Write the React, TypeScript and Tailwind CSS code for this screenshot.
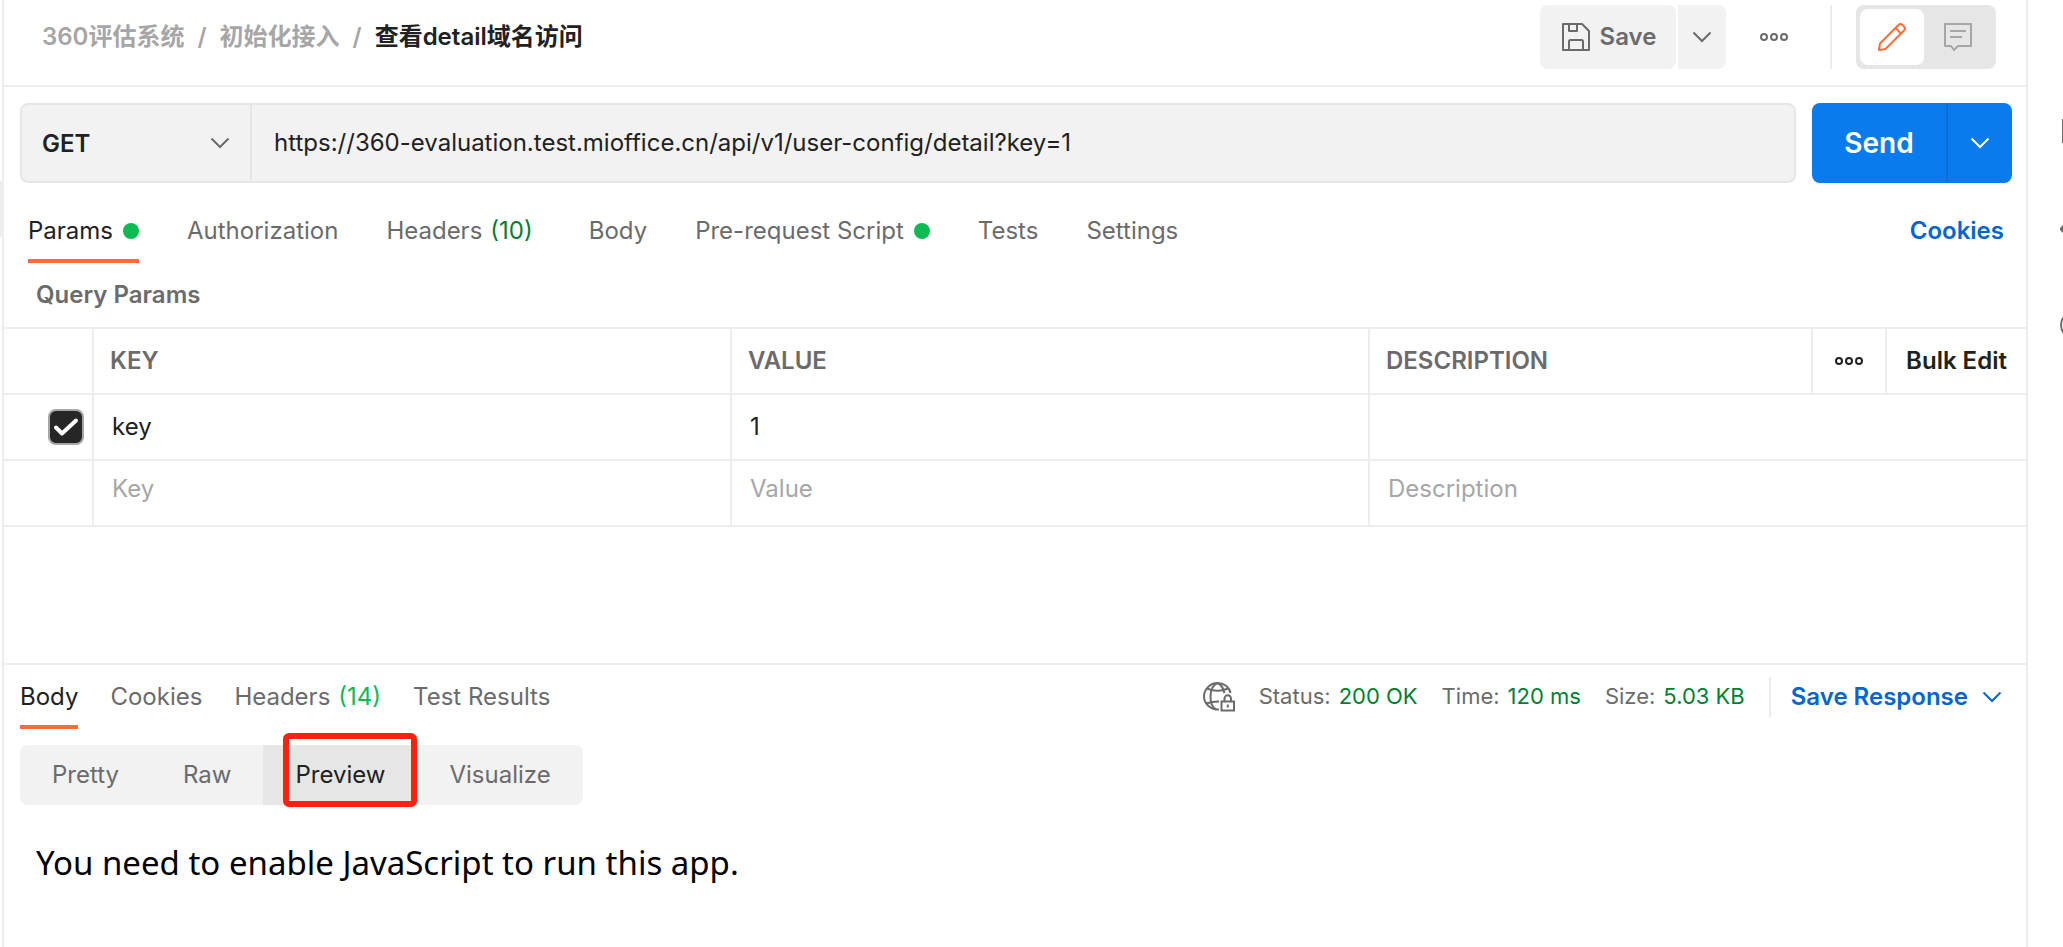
import { useState } from "react";

const REQUEST_TABS = [
  { label: "Params", dot: true },
  { label: "Authorization" },
  { label: "Headers", count: "(10)" },
  { label: "Body" },
  { label: "Pre-request Script", dot: true },
  { label: "Tests" },
  { label: "Settings" },
];

const RESPONSE_TABS = [
  { label: "Body" },
  { label: "Cookies" },
  { label: "Headers", count: "(14)" },
  { label: "Test Results" },
];

const VIEWS = ["Pretty", "Raw", "Preview", "Visualize"];

const STATS = [
  { label: "Status:", value: "200 OK" },
  { label: "Time:", value: "120 ms" },
  { label: "Size:", value: "5.03 KB" },
];

function Chevron() {
  return (
    <svg width="20" height="12" viewBox="0 0 20 12" fill="none" stroke="currentColor" strokeWidth="2" aria-hidden="true">
      <path d="M1.5 1.5 10 10l8.5-8.5" />
    </svg>
  );
}

function Dots() {
  return (
    <svg width="28" height="10" viewBox="0 0 28 10" fill="none" stroke="currentColor" strokeWidth="2" aria-hidden="true">
      <circle cx="4" cy="5" r="3" />
      <circle cx="14" cy="5" r="3" />
      <circle cx="24" cy="5" r="3" />
    </svg>
  );
}

function SaveIcon() {
  return (
    <svg width="28" height="28" viewBox="0 0 28 28" fill="none" stroke="currentColor" strokeWidth="2" strokeLinejoin="round" aria-hidden="true">
      <path d="M1 1h19l7 7v19H1z" />
      <path d="M7 1v7h8V1" />
      <path d="M7 27V18.500Q7 17 8.500 17H19.500Q21 17 21 18.500V27" />
    </svg>
  );
}

function PencilIcon() {
  return (
    <svg width="28" height="28" viewBox="0 0 28 28" fill="none" stroke="currentColor" strokeWidth="2" strokeLinejoin="round" aria-hidden="true">
      <path d="M1 27l1-6.500L20.500 2Q22.500 0 24.500 2L26 3.500Q28 5.500 26 7.500L7.500 26z" />
      <path d="M17.500 5l5.500 5.500" />
    </svg>
  );
}

function CommentIcon() {
  return (
    <svg width="28" height="28" viewBox="0 0 28 28" fill="none" stroke="currentColor" strokeWidth="2" strokeLinejoin="round" aria-hidden="true">
      <path d="M1 1h26v22H14l-4 4-3-4H1z" />
      <path d="M6 8h16M6 14h12" />
    </svg>
  );
}

function GlobeLockIcon() {
  return (
    <svg width="32" height="30" viewBox="0 0 32 30" fill="none" stroke="currentColor" strokeWidth="2" aria-hidden="true">
      <path d="M16 27.500H14.500C7 27 1 21.500 1 14.500S7 1 14.500 1c6.500 0 12 4 13 10" />
      <path d="M13 27.500c-4-2-5.500-7-5.500-13S10 3 14.500 1C18 2.500 20.500 6 21.300 11" />
      <path d="M4 6.500q10.500 4.500 21 0M3 21.500q6-2 13-2" />
      <path d="M18.500 19.500h12.500v9H18.500z" />
      <path d="M21.500 19.500v-3a3.200 3.200 0 0 1 6.500 0v3M24.800 22.500v3" />
    </svg>
  );
}

function Tab({ tab, active, onClick, countClass, className }: {
  tab: { label: string; dot?: boolean; count?: string };
  active: boolean;
  onClick: () => void;
  countClass: string;
  className: string;
}) {
  return (
    <button onClick={onClick} role="tab" aria-selected={active}
      className={`flex items-center gap-2 border-b-4 whitespace-nowrap ${className} ${
        active ? "border-[#ff6c37] text-[#212121]" : "border-transparent text-[#6b6b6b]"
      }`}>
      {tab.label}
      {tab.count && <span className={countClass}>{tab.count}</span>}
      {tab.dot && <span className="ml-[2px] size-4 rounded-full bg-[#0cbb52]" />}
    </button>
  );
}

export default function App() {
  const [requestTab, setRequestTab] = useState("Params");
  const [responseTab, setResponseTab] = useState("Body");
  const [view, setView] = useState("Preview");

  return (
    <div className="flex min-h-screen overflow-hidden bg-white font-['Inter','Noto_Sans_CJK_SC',sans-serif] text-2xl text-[#212121]">
      {/* Sidebar edge */}
      <div className="w-[2px] shrink-0 pt-[181px]">
        <div className="h-14 bg-[#ededed]" />
      </div>

      <main className="min-w-0 flex-1 border-x-2 border-[#ededed]">
        <header className="flex items-center justify-between border-b-2 border-[#ededed] pt-[5px] pr-[30px] pb-4 pl-[38px]">
          <nav className="flex items-center gap-[13px] font-semibold text-[#a6a6a6]">
            <a href="#collection">360评估系统</a>
            <span>/</span>
            <a href="#folder">初始化接入</a>
            <span>/</span>
            <span className="text-[#212121]">查看detail域名访问</span>
          </nav>

          <div className="flex h-16 items-center text-[#6b6b6b]">
            <button className="flex h-full w-[136px] items-center justify-center gap-[10px] rounded-lg bg-[#f2f2f2] pl-[2px] font-semibold">
              <SaveIcon />
              Save
            </button>
            <button aria-label="Save options" className="ml-[2px] flex h-full w-12 items-center justify-center rounded-r-lg bg-[#f2f2f2]">
              <Chevron />
            </button>
            <button aria-label="More actions" className="flex h-full w-24 items-center justify-center">
              <Dots />
            </button>
            <div className="mr-6 ml-2 h-full w-[2px] bg-[#ededed]" />
            <div className="flex h-full w-[140px] rounded-lg bg-[#e6e6e6] p-1">
              <button aria-label="Build" className="flex w-16 items-center justify-center rounded-lg bg-white text-[#ff6c37]">
                <PencilIcon />
              </button>
              <button aria-label="Comments" className="flex flex-1 items-center justify-center text-[#a6a6a6]">
                <CommentIcon />
              </button>
            </div>
          </div>
        </header>

        {/* Request line */}
        <section className="flex gap-4 pt-4 pr-[14px] pl-4">
          <div className="flex h-20 flex-1 rounded-lg border-2 border-[#e6e6e6] bg-[#f2f2f2]">
            <div className="relative w-[230px] border-r-2 border-[#e6e6e6]">
              <select aria-label="Method" className="size-full appearance-none bg-transparent pt-[2px] pl-5 font-semibold">
                <option>GET</option>
                <option>POST</option>
              </select>
              <span className="pointer-events-none absolute top-8 right-5 text-[#6b6b6b]">
                <Chevron />
              </span>
            </div>
            <input aria-label="Request URL" className="min-w-0 flex-1 bg-transparent px-[22px]"
              defaultValue="https://360-evaluation.test.mioffice.cn/api/v1/user-config/detail?key=1" />
          </div>
          <div className="flex h-20 w-[200px] overflow-hidden rounded-lg bg-[#097bed] text-white">
            <button className="flex-1 pt-[2px] text-[28px] font-semibold">Send</button>
            <button aria-label="Send options" className="flex w-[66px] items-center justify-center border-l-2 border-[#0870d8]">
              <Chevron />
            </button>
          </div>
        </section>

        <div className="flex items-start justify-between pr-[22px] pl-6">
          <div role="tablist" className="flex gap-12">
            {REQUEST_TABS.map((t) => (
              <Tab key={t.label} tab={t} active={requestTab === t.label} onClick={() => setRequestTab(t.label)}
                countClass="mr-2 text-[#007f31]" className="h-20 pt-5" />
            ))}
          </div>
          <a href="#cookies" className="pt-8 font-semibold text-[#0265d2]">Cookies</a>
        </div>

        <h2 className="px-8 pt-4 pb-4 font-semibold text-[#6b6b6b]">Query Params</h2>

        <table className="w-full table-fixed border-collapse text-left">
          <colgroup>
            <col className="w-[89px]" />
            <col />
            <col />
            <col className="w-[443px]" />
            <col className="w-[74px]" />
            <col className="w-[140px]" />
          </colgroup>
          <thead>
            <tr className="h-[66px] border-y-2 border-[#ededed] text-[#6b6b6b]">
              <th className="border-r-2 border-[#ededed]" />
              <th className="border-r-2 border-[#ededed] px-4 font-semibold">KEY</th>
              <th className="border-r-2 border-[#ededed] px-4 font-semibold">VALUE</th>
              <th className="border-r-2 border-[#ededed] px-4 font-semibold">DESCRIPTION</th>
              <th className="border-r-2 border-[#ededed] text-[#212121]">
                <button aria-label="Column options" className="flex w-full items-center justify-center">
                  <Dots />
                </button>
              </th>
              <th className="text-center font-semibold whitespace-nowrap text-[#212121]">
                <button>Bulk Edit</button>
              </th>
            </tr>
          </thead>
          <tbody>
            <tr className="h-[66px] border-b-2 border-[#ededed]">
              <td className="border-r-2 border-[#ededed]">
                <label className="relative ml-11 block size-9">
                  <input type="checkbox" defaultChecked aria-label="Enable key"
                    className="peer block size-9 appearance-none rounded-lg border-2 border-[#a6a6a6] checked:bg-[#262626]" />
                  <svg className="pointer-events-none absolute inset-0 hidden peer-checked:block" width="36" height="36" viewBox="0 0 36 36"
                    fill="none" stroke="#fff" strokeWidth="4" strokeLinecap="round" strokeLinejoin="round" aria-hidden="true">
                    <path d="M8 18.500l6 6L28 11.500" />
                  </svg>
                </label>
              </td>
              <td className="border-r-2 border-[#ededed] px-[18px]">key</td>
              <td className="border-r-2 border-[#ededed] px-[18px]">1</td>
              <td colSpan={3} />
            </tr>
            <tr className="h-[66px] border-b-2 border-[#ededed]">
              <td className="border-r-2 border-[#ededed]" />
              {["Key", "Value"].map((name) => (
                <td key={name} className="border-r-2 border-[#ededed] px-[18px] pb-2">
                  <input aria-label={`New ${name}`} placeholder={name} className="block w-full placeholder:text-[#a6a6a6]" />
                </td>
              ))}
              <td colSpan={3} className="px-[18px] pb-2">
                <input aria-label="New Description" placeholder="Description" className="block w-full placeholder:text-[#a6a6a6]" />
              </td>
            </tr>
          </tbody>
        </table>

        {/* Response */}
        <section className="mt-[136px] border-t-2 border-[#ededed]">
          <div className="flex items-start justify-between pr-6 pl-4">
            <div role="tablist" className="flex gap-8">
              {RESPONSE_TABS.map((t) => (
                <Tab key={t.label} tab={t} active={responseTab === t.label} onClick={() => setResponseTab(t.label)}
                  countClass="text-[#0cbb52]" className="h-16 pt-1" />
              ))}
            </div>
            <div className="flex h-16 items-center text-[#6b6b6b]">
              <GlobeLockIcon />
              <dl className="flex gap-6 px-6 text-[22px]">
                {STATS.map((s) => (
                  <div key={s.label} className="flex gap-2 whitespace-nowrap">
                    <dt>{s.label}</dt>
                    <dd className="text-[#007f31]">{s.value}</dd>
                  </div>
                ))}
              </dl>
              <button className="flex h-10 items-center gap-[14px] border-l-2 border-[#ededed] pl-5 font-semibold whitespace-nowrap text-[#0265d2]">
                Save Response
                <Chevron />
              </button>
            </div>
          </div>

          <div className="mt-4 ml-4 flex h-[60px] w-fit rounded-lg bg-[#f2f2f2] text-[#6b6b6b]">
            {VIEWS.map((v) => (
              <button key={v} onClick={() => setView(v)}
                className={`relative px-8 ${view === v ? "bg-[#e6e6e6] text-[#212121]" : ""}`}>
                {v}
                {v === "Preview" && (
                  <span className="pointer-events-none absolute -top-3 right-0 -bottom-[2px] left-5 rounded-md border-[6px] border-[#ff2010]" />
                )}
              </button>
            ))}
          </div>

          <p className="mt-9 px-8 font-['Noto_Sans',sans-serif] text-[33px] text-black">
            You need to enable JavaScript to run this app.
          </p>
        </section>
      </main>

      {/* Context bar, cut off by the window edge */}
      <aside className="w-[35px] shrink-0 overflow-hidden pt-[119px] pl-8 text-[#6b6b6b]">
        <div className="ml-[2px] size-6 border-2 border-current" />
        <svg className="mt-[76px]" width="28" height="20" viewBox="0 0 28 20" fill="none" stroke="currentColor" strokeWidth="3" aria-hidden="true">
          <path d="M8 3l-7 7 7 7M20 3l7 7-7 7" />
        </svg>
        <div className="mt-[72px] size-7 rounded-full border-2 border-current" />
      </aside>
    </div>
  );
}
